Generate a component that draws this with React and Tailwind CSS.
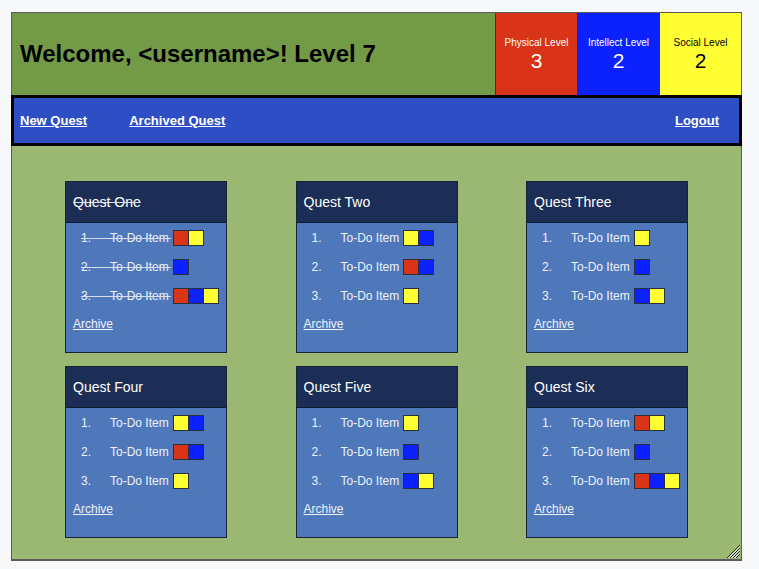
import React from 'react';

// colour swatches for stat types
const SWATCH = {
  p: 'bg-[#d93417]',
  i: 'bg-[#0b22ff]',
  s: 'bg-[#ffff33]',
};

const quests = [
  {
    title: 'Quest One',
    done: true,
    items: [
      { stats: ['p', 's'], done: true },
      { stats: ['i'], done: true },
      { stats: ['p', 'i', 's'], done: true },
    ],
  },
  {
    title: 'Quest Two',
    items: [{ stats: ['s', 'i'] }, { stats: ['p', 'i'] }, { stats: ['s'] }],
  },
  {
    title: 'Quest Three',
    items: [{ stats: ['s'] }, { stats: ['i'] }, { stats: ['i', 's'] }],
  },
  {
    title: 'Quest Four',
    items: [{ stats: ['s', 'i'] }, { stats: ['p', 'i'] }, { stats: ['s'] }],
  },
  {
    title: 'Quest Five',
    items: [{ stats: ['s'] }, { stats: ['i'] }, { stats: ['i', 's'] }],
  },
  {
    title: 'Quest Six',
    items: [{ stats: ['p', 's'] }, { stats: ['i'] }, { stats: ['p', 'i', 's'] }],
  },
];

const LevelBox = ({ label, value, color, dark }) => (
  <div className={`w-[82px] shrink-0 border-l border-[#333] ${color} ${dark ? 'text-black' : 'text-white'} flex flex-col items-center pt-[23px]`}>
    <span className="text-[10px] leading-[13px]">{label}</span>
    <span className="text-[21px] leading-[24px]">{value}</span>
  </div>
);

const TodoRow = ({ n, item }) => (
  <div className="h-[29px] flex items-center pl-[15px]">
    <div className={`relative flex items-center ${item.done ? 'after:absolute after:left-0 after:right-[-2px] after:top-[53%] after:h-px after:bg-[#d8dde8]' : ''}`}>
      <span className="w-[29px]">{n}.</span>
      <span>To-Do Item</span>
    </div>
    <div className="flex ml-1">
      {item.stats.map((s, k) => (
        <div key={k} className={`w-4 h-4 border border-[#2a2f3a] ${SWATCH[s]} ${k > 0 ? '-ml-px' : ''}`} />
      ))}
    </div>
  </div>
);

const QuestCard = ({ quest }) => (
  <div className="w-[162px] h-[172px] border border-[#1a2238] bg-[#4f78bb] text-[#eef2fa] flex flex-col">
    <div className="h-[41px] shrink-0 bg-[#1c2e55] border-b border-[#121a30] flex items-center px-[7px]">
      <span className={`text-[14px] text-white ${quest.done ? 'line-through decoration-[#d8dde8]' : ''}`}>{quest.title}</span>
    </div>
    <div className="text-[12px] flex flex-col">
      {quest.items.map((item, j) => (
        <TodoRow key={j} n={j + 1} item={item} />
      ))}
      <div className="h-[28px] flex items-center px-[7px]">
        <a href="#" className="underline">Archive</a>
      </div>
    </div>
  </div>
);

export default function App() {
  return (
    <div className="min-h-[569px] bg-[#f7f8fa] pt-[12px] pl-[11px]" style={{ fontFamily: '"Liberation Sans", Arial, sans-serif' }}>
      <div className="w-[731px] h-[549px] border border-b-2 border-[#5c5c5c] flex flex-col bg-[#9bb872] relative">
        {/* top bar */}
        <div className="h-[82px] shrink-0 flex bg-[#739a47]">
          <div className="flex-1 flex items-center pl-[8px]">
            <h1 className="text-[24px] font-bold text-black">Welcome, &lt;username&gt;! Level 7</h1>
          </div>
          <LevelBox label="Physical Level" value="3" color="bg-[#d93417]" />
          <LevelBox label="Intellect Level" value="2" color="bg-[#0b22ff]" />
          <LevelBox label="Social Level" value="2" color="bg-[#ffff33]" dark />
        </div>

        {/* nav */}
        <nav className="h-[51px] shrink-0 -mx-px border-[3px] border-black bg-[#2d4ec4] flex items-center px-[6px] text-[13px] font-bold text-white">
          <a href="#" className="underline">New Quest</a>
          <a href="#" className="underline ml-[42px]">Archived Quest</a>
          <a href="#" className="underline ml-auto mr-[14px]">Logout</a>
        </nav>

        {/* quest grid */}
        <div className="grid grid-cols-[162px_162px_162px] justify-between px-[53px] pt-[35px] gap-y-[13px]">
          {quests.map((q, i) => (
            <QuestCard key={i} quest={q} />
          ))}
        </div>

        {/* resize grip */}
        <svg className="absolute right-[1px] bottom-[1px]" width="14" height="14" viewBox="0 0 14 14">
          <g stroke="#222" strokeWidth="1">
            <line x1="14" y1="1" x2="1" y2="14" />
            <line x1="14" y1="4" x2="4" y2="14" />
            <line x1="14" y1="7" x2="7" y2="14" />
            <line x1="14" y1="10" x2="10" y2="14" />
          </g>
          <g stroke="#fff" strokeWidth="1">
            <line x1="14" y1="2.5" x2="2.5" y2="14" />
            <line x1="14" y1="5.5" x2="5.5" y2="14" />
            <line x1="14" y1="8.5" x2="8.5" y2="14" />
          </g>
        </svg>
      </div>
    </div>
  );
}
